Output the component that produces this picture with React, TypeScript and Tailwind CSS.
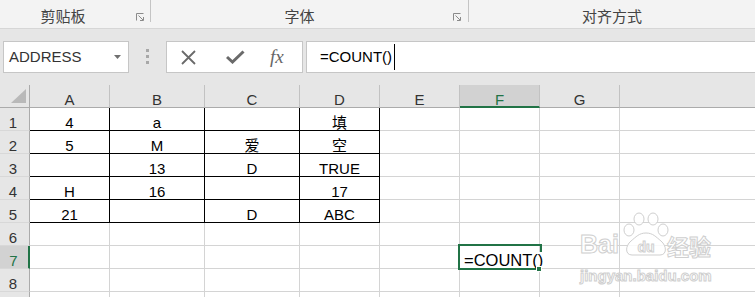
import React from "react";

const Launcher = ({ className }: { className: string }) => (
  <svg className={className} width="8" height="8" viewBox="0 0 8 8" fill="none" stroke="#8a8a8a" strokeWidth="1">
    <path d="M0.5 7.5V0.5H7.5" />
    <path d="M2.5 2.5L7 7" />
    <path d="M4 7.5H7.5V4" />
  </svg>
);

const letters = ["A", "B", "C", "D", "E", "F", "G", ""];
const data: string[][] = [
  ["4", "a", "", "填"],
  ["5", "M", "爱", "空"],
  ["", "13", "D", "TRUE"],
  ["H", "16", "", "17"],
  ["21", "", "D", "ABC"],
];

export default function App() {
  const rows = [1, 2, 3, 4, 5, 6, 7, 8, 9];
  return (
    <div className="relative w-[755px] h-[297px] overflow-hidden bg-white font-['Liberation_Sans','Noto_Sans_CJK_SC',sans-serif] text-black">
      {/* ribbon group labels */}
      <div className="flex h-[29px] bg-[#f3f3f3] border-b border-[#d6d6d6] text-[15px] leading-[15px] text-[#444] font-['Noto_Sans_CJK_SC',sans-serif]">
        <div className="relative w-[150px] flex justify-center pr-[24px] pt-[8px]">
          剪贴板
          <Launcher className="absolute left-[136px] top-[13px]" />
        </div>
        <div className="w-px h-[22px] bg-[#c4c4c4]" />
        <div className="relative w-[317px] flex justify-center pr-[20px] pt-[8px]">
          字体
          <Launcher className="absolute left-[302px] top-[13px]" />
        </div>
        <div className="w-px h-[22px] bg-[#c4c4c4]" />
        <div className="flex-1 flex justify-center pt-[8px]">对齐方式</div>
      </div>

      {/* formula bar */}
      <div className="flex items-start h-[56px] bg-[#e6e6e6] pt-[12px]">
        <div className="relative ml-[3px] w-[126px] h-[32px] border border-[#c6c6c6] bg-white flex items-center pl-[5px] text-[15px] text-[#333]">
          ADDRESS
          <svg className="absolute left-[110px] top-[13px]" width="8" height="5" viewBox="0 0 8 5">
            <path d="M0 0H7L3.5 4Z" fill="#707070" />
          </svg>
        </div>
        <div className="ml-[17px] mt-[8px] flex flex-col gap-[3px]">
          <div className="w-[3px] h-[3px] bg-[#a8a8a8]" />
          <div className="w-[3px] h-[3px] bg-[#a8a8a8]" />
          <div className="w-[3px] h-[3px] bg-[#a8a8a8]" />
        </div>
        <div className="ml-[17px] w-[137px] h-[32px] border border-[#c6c6c6] bg-white flex items-center">
          <svg className="ml-[14px]" width="15" height="15" viewBox="0 0 15 15" fill="none" stroke="#6a6a6a" strokeWidth="1.8">
            <path d="M1 1L14 14M14 1L1 14" />
          </svg>
          <svg className="ml-[30px]" width="19" height="14" viewBox="0 0 19 14" fill="none" stroke="#6a6a6a" strokeWidth="3">
            <path d="M1 7L6.5 12L17.5 1.5" />
          </svg>
          <span className="ml-[25px] mb-[1px] text-[19px] leading-[19px] italic text-[#666] font-['Liberation_Serif',serif]">fx</span>
        </div>
        <div className="ml-[3px] flex-1 h-[32px] border border-r-0 border-[#c6c6c6] bg-white flex items-center pl-[13px] text-[15px]">
          <span>=COUNT()</span>
          <div className="ml-[2px] w-px h-[26px] bg-black" />
        </div>
      </div>

      {/* sheet grid */}
      <div className="grid grid-cols-[30px_80px_95px_95px_80px_80px_80px_80px_1fr] auto-rows-[23px] text-[15px] leading-[15px]">
        <div className="relative bg-[#e6e6e6] border-r border-b border-r-[#ababab] border-b-[#ababab]">
          <svg className="absolute left-[11px] top-[4px]" width="16" height="15" viewBox="0 0 16 15">
            <path d="M0 14H15V0Z" fill="#b9b9b9" />
          </svg>
        </div>
        {letters.map((l, i) =>
          l === "F" ? (
            <div key={i} className="bg-[#d2d2d2] border-r border-r-[#c2c2c2] border-b-2 border-b-[#217346] flex items-end justify-center text-[#217346]">
              <span className="translate-y-[1px]">{l}</span>
            </div>
          ) : (
            <div key={i} className={`bg-[#e6e6e6] border-b border-b-[#ababab] flex items-end justify-center text-[#333] ${i < 7 ? "border-r border-r-[#c2c2c2]" : ""}`}>
              {l}
            </div>
          )
        )}
        {rows.map((r) => (
          <React.Fragment key={r}>
            {r === 7 ? (
              <div className="bg-[#d2d2d2] border-r-2 border-r-[#217346] border-b border-b-[#d8d8d8] flex items-end justify-center pr-[1px] text-[#217346]">
                {r}
              </div>
            ) : (
              <div className="bg-[#e6e6e6] border-r border-r-[#ababab] border-b border-b-[#d8d8d8] flex items-end justify-center pr-[3px] text-[#333]">
                {r}
              </div>
            )}
            {letters.map((_, c) => {
              const inTable = r <= 5 && c < 4;
              const text = inTable ? data[r - 1][c] : "";
              if (r === 7 && c === 5) {
                return (
                  <div key={c} className="relative bg-white border-r border-b border-[#d4d4d4] flex items-end">
                    <div className="absolute left-[-2px] top-[-2px] w-[84px] h-[26px] border-2 border-[#217346] z-10" />
                    <span className="relative z-20 ml-[4px] pr-[2px] bg-white whitespace-nowrap text-[16.5px] leading-[16px]">=COUNT()</span>
                    <div className="absolute left-[76px] top-[20px] w-[6px] h-[6px] bg-[#217346] border border-white z-30" />
                  </div>
                );
              }
              return (
                <div
                  key={c}
                  className={`bg-white border-b flex items-end justify-center ${c < 7 ? "border-r" : ""} ${inTable ? "border-black" : "border-[#d4d4d4]"}`}
                >
                  {text}
                </div>
              );
            })}
          </React.Fragment>
        ))}
      </div>

      {/* watermark */}
      <svg className="absolute left-[575px] top-[208px] z-40 pointer-events-none" width="150" height="82" viewBox="0 0 150 82">
        <g fill="#ffffff" fillOpacity="0.85" stroke="#cfcfcf" strokeWidth="1" fontFamily="'Liberation Sans', sans-serif" fontWeight="bold">
          <text x="5" y="45" fontSize="25">Bai</text>
          <ellipse cx="54" cy="22" rx="5" ry="6" />
          <ellipse cx="64" cy="11" rx="5" ry="6" />
          <ellipse cx="78" cy="11" rx="5" ry="6" />
          <ellipse cx="88" cy="22" rx="5" ry="6" />
          <path d="M57 47C50 47 50 38 56 33C61 29 64 25 71 25C78 25 81 29 86 33C92 38 92 47 85 47Z" />
          <text x="71" y="44" fontSize="14" textAnchor="middle">du</text>
          <text x="92" y="47" fontSize="22" fontFamily="'Noto Sans CJK SC', sans-serif">经验</text>
          <text x="5" y="73" fontSize="15">jingyan.baidu.com</text>
        </g>
      </svg>
    </div>
  );
}
